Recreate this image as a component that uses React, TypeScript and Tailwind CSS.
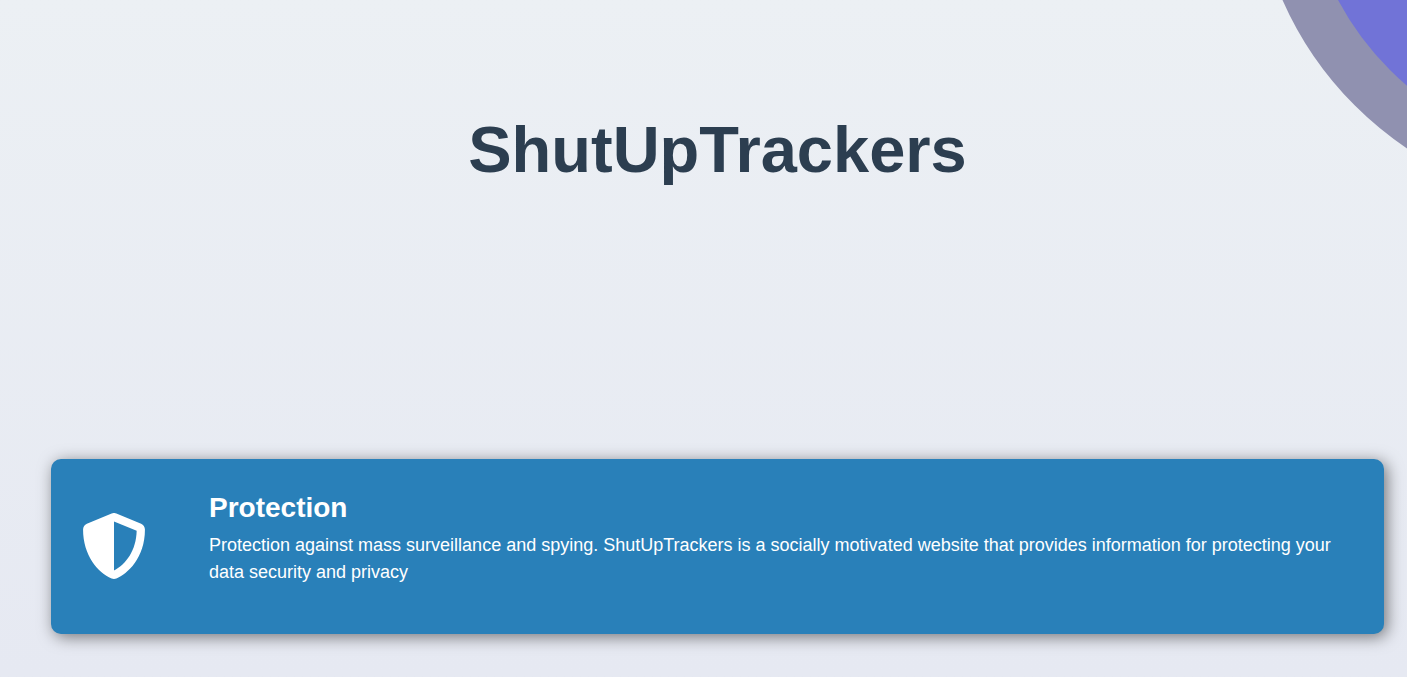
import { FaShieldAlt } from "react-icons/fa";

export default function App() {
  return (
    <div className="relative min-h-screen overflow-hidden bg-linear-to-b from-[#ecf0f4] to-[#e6e9f2] font-['Liberation_Sans',Arial,sans-serif]">
      <div
        aria-hidden="true"
        className="absolute -top-[487px] -right-[540px] size-[694px] rounded-full border-[50px] border-[#9091b0] bg-[#7173d7]"
      />
      <main className="relative pt-[112px] pr-[23px] pb-[43px] pl-[51px]">
        <h1 className="text-center text-[65px] leading-[76px] font-bold text-[#2c3e50]">
          ShutUpTrackers
        </h1>
        <section className="mt-[271px] flex items-center gap-[62px] rounded-[10px] bg-[#2980b9] px-[30px] pt-[30px] pb-[45px] text-white shadow-[3px_3px_16px_rgba(0,0,0,0.5)]">
          <FaShieldAlt className="mt-[14px] size-[66px] shrink-0" aria-hidden="true" />
          <div>
            <h2 className="text-[28px] leading-[38px] font-bold">Protection</h2>
            <p className="mt-[5px] pb-[3px] text-[18px] leading-[27px]">
              Protection against mass surveillance and spying. ShutUpTrackers is a socially motivated website that provides information for protecting your data security and privacy
            </p>
          </div>
        </section>
      </main>
    </div>
  );
}
